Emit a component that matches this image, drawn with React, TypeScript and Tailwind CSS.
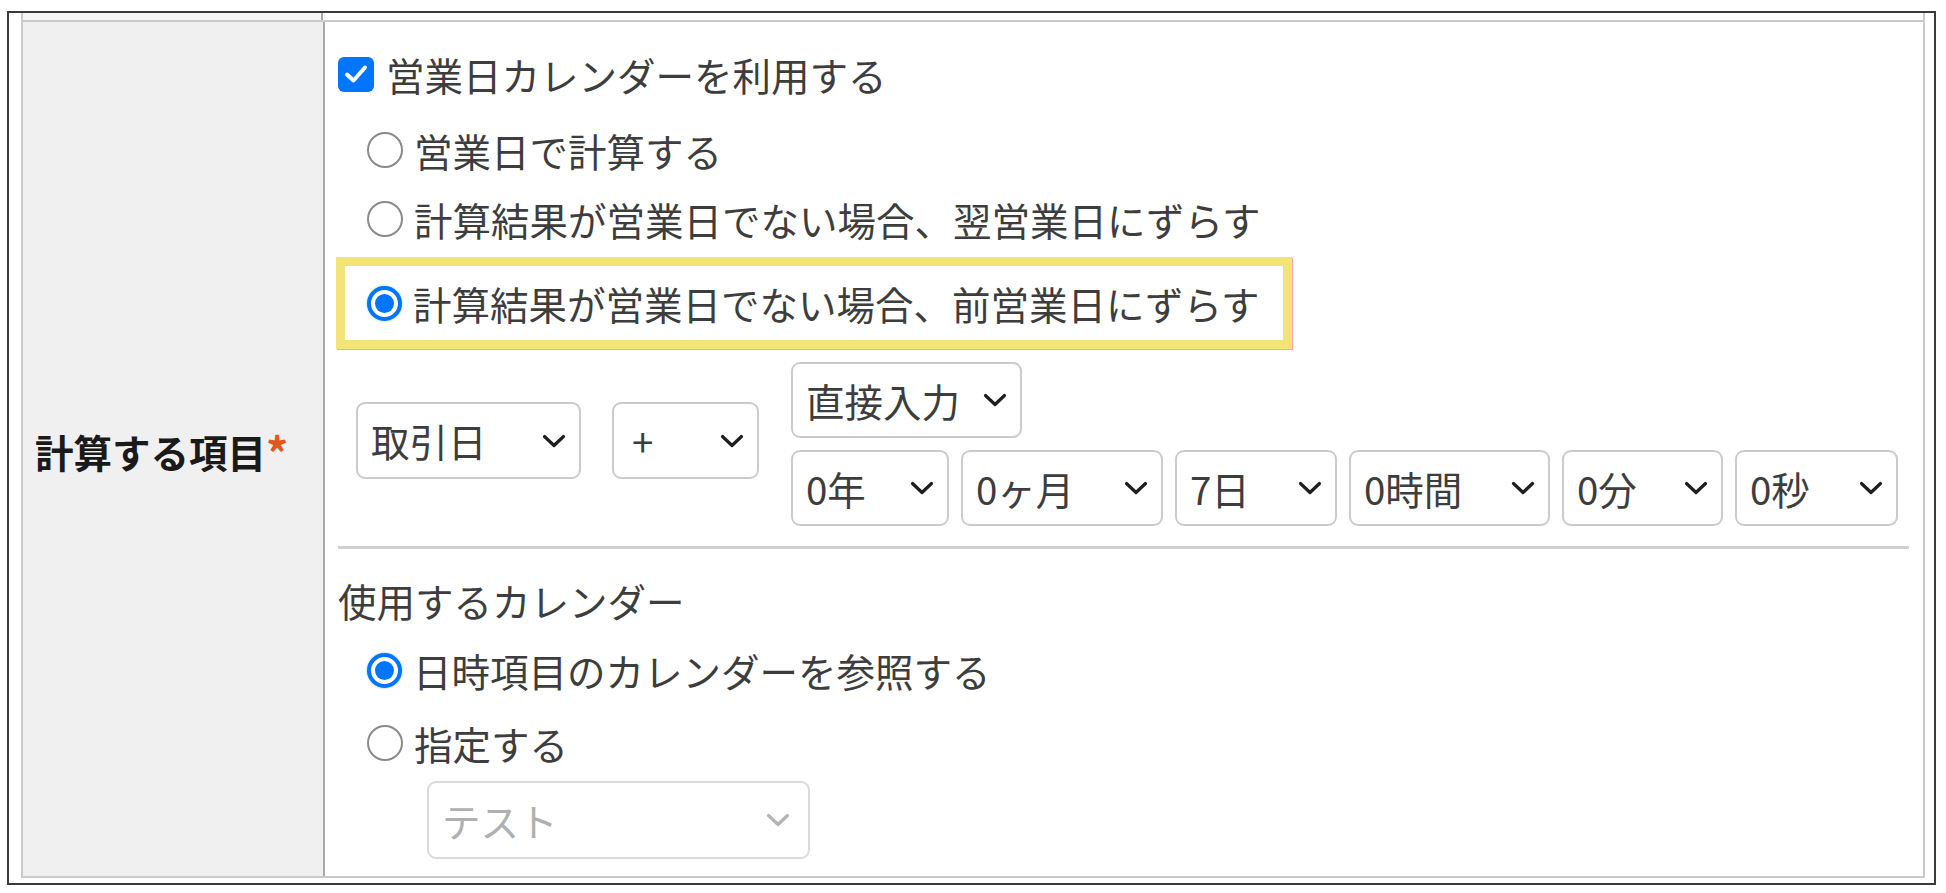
import React from 'react';

function Chevron({ light }: { light?: boolean }) {
  return (
    <svg width="24" height="14" viewBox="0 0 24 14" className="shrink-0">
      <path
        d="M2.5 2.5 L12 11.5 L21.5 2.5"
        fill="none"
        stroke={light ? '#b4b4b4' : '#1e1e1e'}
        strokeWidth="3.2"
        strokeLinecap="round"
        strokeLinejoin="round"
      />
    </svg>
  );
}

function Select({ label, className, disabled }: { label: string; className: string; disabled?: boolean }) {
  return (
    <div
      className={`flex items-center justify-between shrink-0 rounded-[9px] border-2 bg-white pl-[13px] pr-[13px] ${
        disabled ? 'border-[#dadada] text-[#b0b0b0]' : 'border-[#cbcbcb] text-[#3d3d3d]'
      } ${className}`}
    >
      <span className="whitespace-nowrap">{label}</span>
      <Chevron light={disabled} />
    </div>
  );
}

function Radio({ checked }: { checked?: boolean }) {
  if (checked) {
    return (
      <span className="flex h-[35px] w-[35px] shrink-0 items-center justify-center rounded-full border-[4px] border-[#0075ff] bg-white shadow-[0_0_2px_rgba(0,117,255,0.5)]">
        <span className="h-[19px] w-[19px] rounded-full bg-[#0075ff]" />
      </span>
    );
  }
  return <span className="h-[36px] w-[36px] shrink-0 rounded-full border-[2.5px] border-[#8a8a8a] bg-white" />;
}

function RadioRow({ label, checked, className }: { label: string; checked?: boolean; className: string }) {
  return (
    <div className={`flex items-center gap-[11px] pl-[29px] ${className}`}>
      <Radio checked={checked} />
      <span className="whitespace-nowrap">{label}</span>
    </div>
  );
}

export default function App() {
  return (
    <div className="h-[893px] w-[1946px] bg-white pl-[7px] pt-[11px] font-['Noto_Sans_CJK_JP','Noto_Sans',sans-serif] text-[38.5px] leading-none text-[#3d3d3d]">
      <div className="flex h-[874px] w-[1929px] flex-col border-2 border-[#3a3a3a] pb-[5px] pl-[12px] pr-[9px]">
        <div className="flex h-full flex-col border-x-2 border-[#cacaca]">
          {/* cut-off previous row */}
          <div className="flex h-[7px]">
            <div className="w-[300px] border-r-2 border-[#a9a9a9] bg-[#f5f5f5]" />
            <div className="flex-1" />
          </div>

          <div className="flex flex-1 border-y-2 border-[#cacaca]">
            {/* label column */}
            <div className="flex w-[302px] items-center border-r-2 border-[#a9a9a9] bg-[#f0f0f0] pl-[12px] pt-[4px]">
              <span className="font-bold text-[#1a1a1a]">計算する項目</span>
              <span className="text-[44px] font-bold text-[#e4571c]">*</span>
            </div>

            {/* value column */}
            <div className="flex flex-1 flex-col pl-[13px] pr-[14px] pt-[14px]">
              <div className="flex h-[76px] items-center gap-[12px]">
                <span className="flex h-[35px] w-[36px] shrink-0 items-center justify-center rounded-[6px] bg-[#0075ff]">
                  <svg width="24" height="20" viewBox="0 0 24 20">
                    <path d="M3 10.5 L9.5 16.5 L21 3.5" fill="none" stroke="#fff" strokeWidth="4" strokeLinecap="round" strokeLinejoin="round" />
                  </svg>
                </span>
                <span>営業日カレンダーを利用する</span>
              </div>

              <RadioRow label="営業日で計算する" className="h-[76px]" />
              <RadioRow label="計算結果が営業日でない場合、翌営業日にずらす" className="h-[69px] pb-[7px]" />

              <div className="-ml-[2px] flex h-[92px] w-[956px] items-center gap-[11px] border-[9px] border-[#f3e47a] pl-[22px] shadow-[1px_1px_0_#f4a8a8]">
                <Radio checked />
                <span className="whitespace-nowrap">計算結果が営業日でない場合、前営業日にずらす</span>
              </div>

              {/* date offset selects */}
              <div className="mt-[13px] flex items-start">
                <div className="ml-[18px] mt-[40px] flex gap-[31px]">
                  <Select label="取引日" className="h-[77px] w-[225px]" />
                  <Select label="+" className="h-[77px] w-[147px] pl-[18px]" />
                </div>
                <div className="ml-[32px] flex flex-col gap-[12px]">
                  <Select label="直接入力" className="h-[76px] w-[231px]" />
                  <div className="flex gap-[12px]">
                    <Select label="0年" className="h-[76px] w-[158px]" />
                    <Select label="0ヶ月" className="h-[76px] w-[202px]" />
                    <Select label="7日" className="h-[76px] w-[162px]" />
                    <Select label="0時間" className="h-[76px] w-[201px]" />
                    <Select label="0分" className="h-[76px] w-[161px]" />
                    <Select label="0秒" className="h-[76px] w-[163px]" />
                  </div>
                </div>
              </div>

              <div className="mt-[20px] h-[3px] bg-[#d0d0d0]" />

              <div className="mt-[16px] flex h-[70px] items-center">使用するカレンダー</div>
              <RadioRow label="日時項目のカレンダーを参照する" checked className="h-[70px]" />
              <RadioRow label="指定する" className="h-[76px]" />
              <div className="pl-[89px]">
                <Select label="テスト" disabled className="h-[78px] w-[383px] pr-[18px]" />
              </div>
            </div>
          </div>
        </div>
      </div>
    </div>
  );
}
